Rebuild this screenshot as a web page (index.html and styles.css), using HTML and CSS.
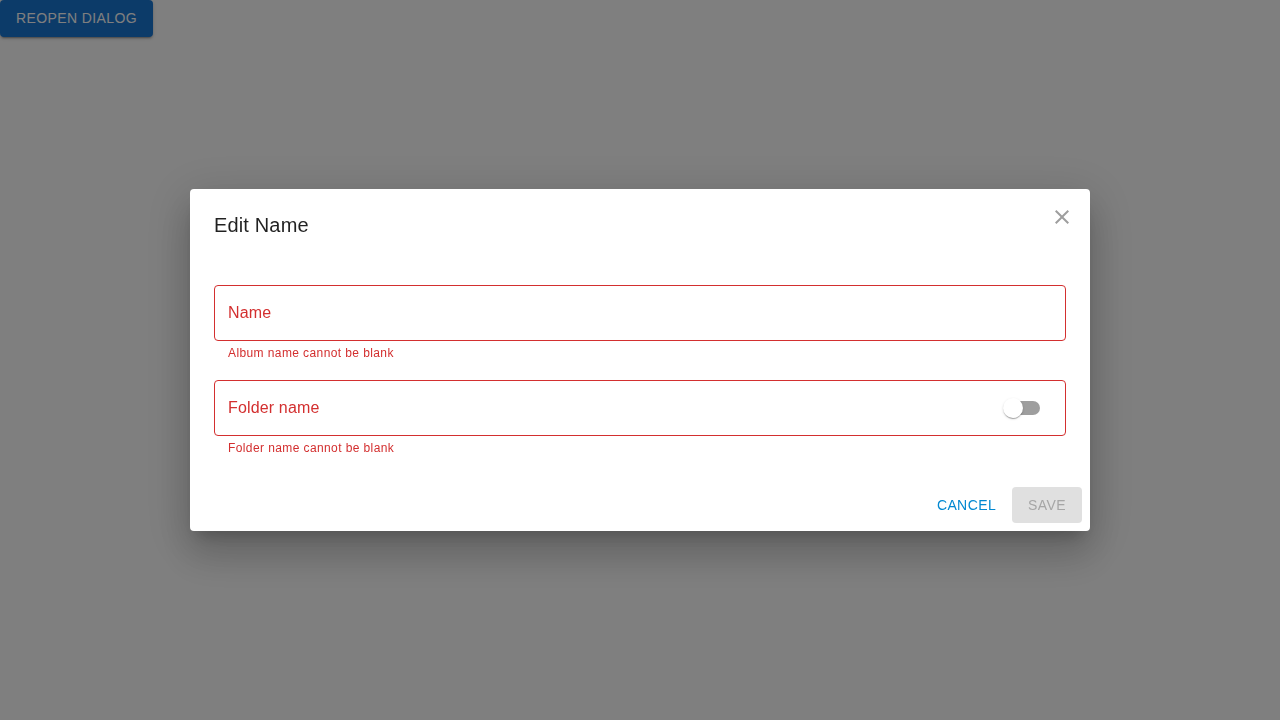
FILE: index.html
```html
<!DOCTYPE html>
<html>
<head>
<meta charset="utf-8">
<link rel="stylesheet" href="styles.css">
</head>
<body>
<button class="reopen">Reopen dialog</button>
<div class="backdrop">
  <div class="dialog">
    <h2 class="title">Edit Name</h2>
    <button class="close" aria-label="close">
      <svg viewBox="0 0 24 24" width="24" height="24"><path d="M19 6.41 17.59 5 12 10.59 6.41 5 5 6.41 10.59 12 5 17.59 6.41 19 12 13.41 17.59 19 19 17.59 13.41 12z" fill="currentColor"/></svg>
    </button>
    <div class="content">
      <div class="field">
        <div class="box">
          <span class="label">Name</span>
        </div>
        <p class="helper">Album name cannot be blank</p>
      </div>
      <div class="field">
        <div class="box">
          <span class="label">Folder name</span>
          <span class="switch"><span class="track"></span><span class="thumb"></span></span>
        </div>
        <p class="helper">Folder name cannot be blank</p>
      </div>
    </div>
    <div class="actions">
      <button class="btn-text">Cancel</button>
      <button class="btn-disabled" disabled>Save</button>
    </div>
  </div>
</div>
</body>
</html>
```
FILE: styles.css
```css
html, body {
  margin: 0;
  padding: 0;
  width: 1280px;
  height: 720px;
  background: #fff;
  font-family: "Liberation Sans", Arial, sans-serif;
  overflow: hidden;
}
.reopen {
  display: block;
  margin: 0;
  border: 0;
  border-radius: 4px;
  background: #1976d2;
  color: #fff;
  font-family: inherit;
  font-size: 14px;
  font-weight: 500;
  letter-spacing: 0.4px;
  text-transform: uppercase;
  line-height: 24.5px;
  padding: 6px 16px;
  box-shadow: 0 3px 1px -2px rgba(0,0,0,.2), 0 2px 2px 0 rgba(0,0,0,.14), 0 1px 5px 0 rgba(0,0,0,.12);
}
.backdrop {
  position: fixed;
  inset: 0;
  background: rgba(0,0,0,0.5);
  display: flex;
  align-items: center;
  justify-content: center;
}
.dialog {
  position: relative;
  width: 900px;
  background: #fff;
  border-radius: 4px;
  box-shadow: 0 11px 15px -7px rgba(0,0,0,.2), 0 24px 38px 3px rgba(0,0,0,.14), 0 9px 46px 8px rgba(0,0,0,.12);
}
.title {
  margin: 0;
  padding: 20px 24px 12px;
  font-size: 20px;
  font-weight: 400;
  line-height: 32px;
  color: rgba(0,0,0,0.87);
  letter-spacing: 0.15px;
}
.close {
  position: absolute;
  top: 8px;
  right: 8px;
  width: 40px;
  height: 40px;
  padding: 8px;
  border: 0;
  background: none;
  color: #9e9e9e;
  display: flex;
  align-items: center;
  justify-content: center;
}
.content {
  padding: 32px 24px 21px;
  display: flex;
  flex-direction: column;
  gap: 17px;
}
.field {
  display: flex;
  flex-direction: column;
}
.box {
  height: 56px;
  box-sizing: border-box;
  border: 1px solid #d32f2f;
  border-radius: 4px;
  display: flex;
  align-items: center;
  padding: 0 13px 0 13px;
}
.label {
  flex: 1;
  color: #d32f2f;
  font-size: 16px;
  letter-spacing: 0.15px;
}
.helper {
  margin: 2px 14px 0;
  color: #d32f2f;
  font-size: 12px;
  line-height: 20px;
  letter-spacing: 0.4px;
}
.switch {
  position: relative;
  width: 58px;
  height: 38px;
  box-sizing: border-box;
  padding: 12px;
  flex: none;
}
.track {
  display: block;
  width: 34px;
  height: 14px;
  border-radius: 7px;
  background: #000;
  opacity: 0.38;
}
.thumb {
  position: absolute;
  left: 9px;
  top: 9px;
  width: 20px;
  height: 20px;
  border-radius: 50%;
  background: #fff;
  box-shadow: 0 2px 1px -1px rgba(0,0,0,.2), 0 1px 1px 0 rgba(0,0,0,.14), 0 1px 3px 0 rgba(0,0,0,.12);
}
.actions {
  padding: 8px;
  display: flex;
  justify-content: flex-end;
  gap: 8px;
}
.btn-text, .btn-disabled {
  border: 0;
  font-family: inherit;
  font-size: 14px;
  font-weight: 500;
  letter-spacing: 0.4px;
  text-transform: uppercase;
  line-height: 24px;
  border-radius: 4px;
}
.btn-text {
  background: none;
  color: #0288d1;
  padding: 6px 8px;
}
.btn-disabled {
  background: #e0e0e0;
  color: #a6a6a6;
  padding: 6px 16px;
}
```
